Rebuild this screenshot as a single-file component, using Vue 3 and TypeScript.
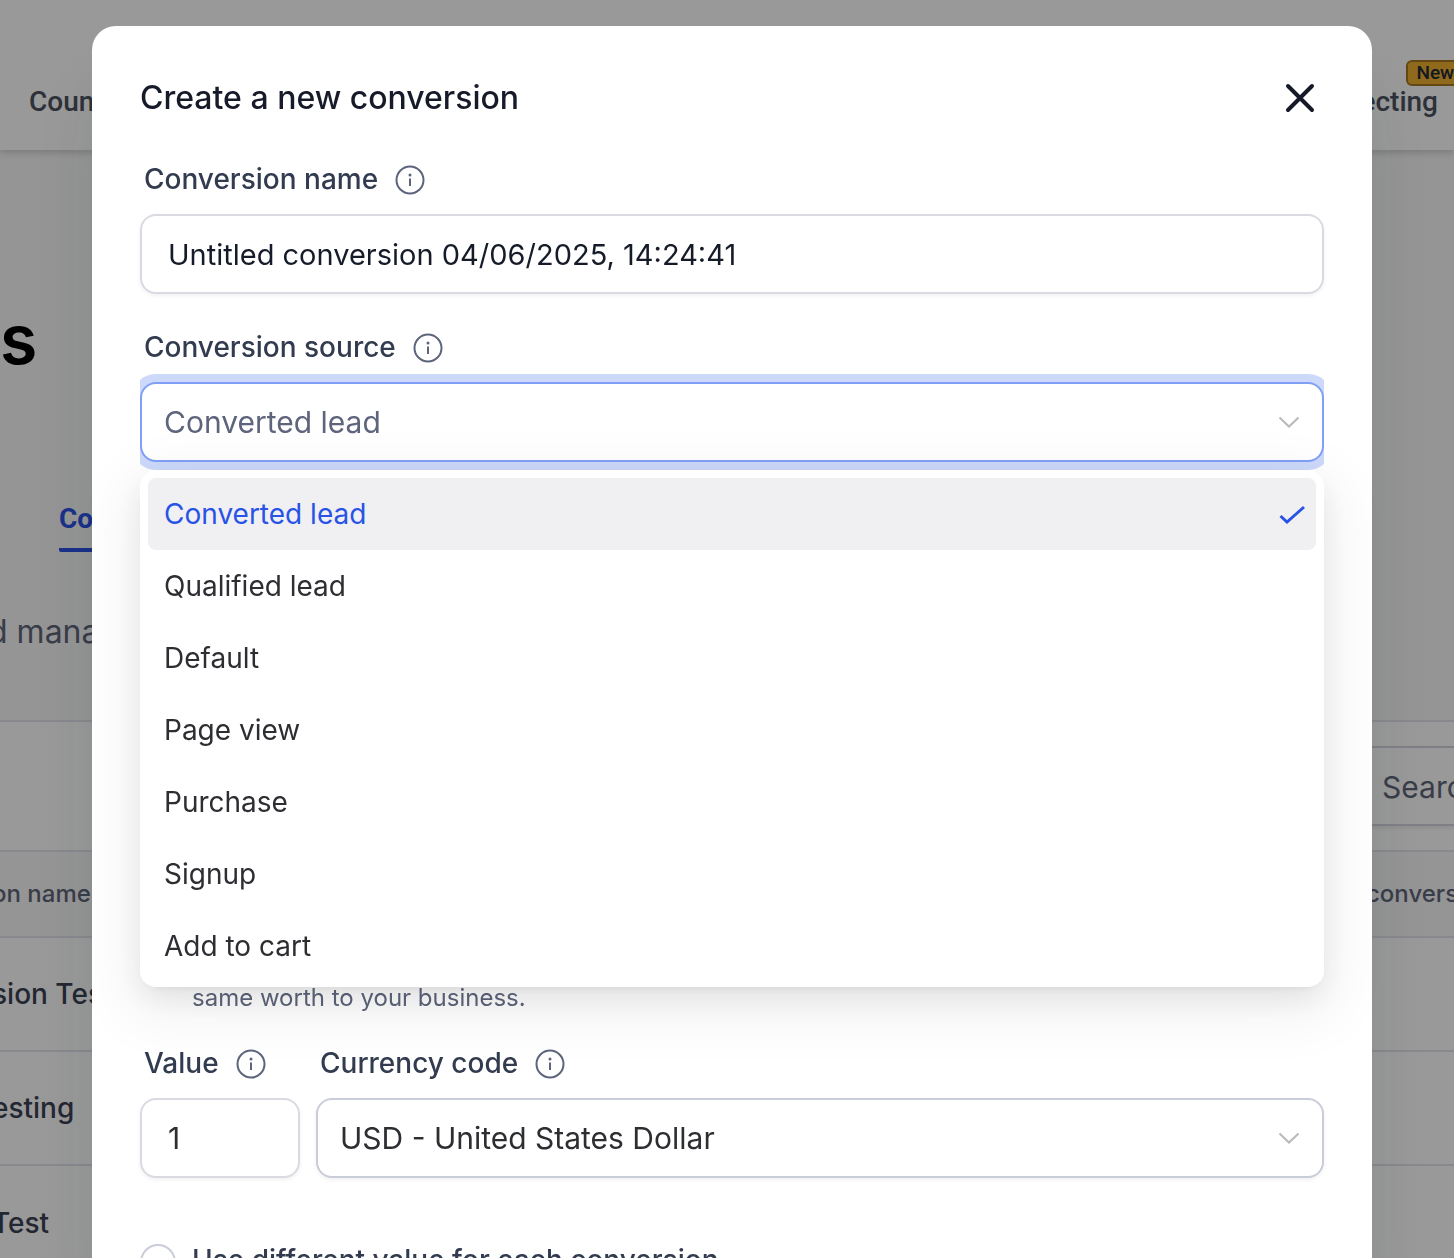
<script setup lang="ts">
import { ref } from 'vue'

const name = ref('Untitled conversion 04/06/2025, 14:24:41')
const source = ref('Converted lead')
const value = ref('1')
const currency = ref('USD - United States Dollar')
const mode = ref('same')

const sources: string[] = [
  'Converted lead',
  'Qualified lead',
  'Default',
  'Page view',
  'Purchase',
  'Signup',
  'Add to cart',
]
const rows: string[] = ['sion Tes', 'esting', 'Test']
</script>

<template>
  <div class="page">
    <header class="nav">
      <a href="#">Coun</a>
      <a href="#" class="nav-end">ecting<span class="badge">New</span></a>
    </header>
    <section class="hero">
      <h1>s</h1>
      <a href="#" class="tab">Co</a>
      <p>d mana</p>
    </section>
    <div class="toolbar">
      <input class="search" type="text" placeholder="Searc" aria-label="Search" />
    </div>
    <table>
      <thead>
        <tr><th>on name</th><th class="last">convers</th></tr>
      </thead>
      <tbody>
        <tr v-for="row in rows" :key="row"><td>{{ row }}</td><td class="last"></td></tr>
      </tbody>
    </table>
  </div>

  <div class="overlay">
    <form class="modal" role="dialog" aria-labelledby="title" @submit.prevent>
      <div class="title-row">
        <h2 id="title">Create a new conversion</h2>
        <button type="button" class="close" aria-label="Close">
          <svg viewBox="0 0 32 32" width="32" height="32"><path d="M4 4L28 28M28 4L4 28" /></svg>
        </button>
      </div>

      <div class="label-row">
        <label for="name">Conversion name</label>
        <svg class="info" viewBox="0 0 30 30"><circle cx="15" cy="15" r="13.500" /><path d="M15 13.500V21" /><circle class="dot" cx="15" cy="10" r="1.500" /></svg>
      </div>
      <input id="name" v-model="name" class="control name" type="text" />

      <div class="label-row spaced">
        <label for="source">Conversion source</label>
        <svg class="info" viewBox="0 0 30 30"><circle cx="15" cy="15" r="13.500" /><path d="M15 13.500V21" /><circle class="dot" cx="15" cy="10" r="1.500" /></svg>
      </div>
      <div class="source">
        <div class="select-box ring">
          <select id="source" v-model="source" class="control focused">
            <option v-for="s in sources" :key="s">{{ s }}</option>
          </select>
          <svg class="chevron" viewBox="0 0 24 16"><path d="M2.500 3.500L12 12.500L21.500 3.500" /></svg>
        </div>
        <ul class="menu" role="listbox" aria-label="Conversion source">
          <li v-for="s in sources" :key="s" role="option" :aria-selected="s === source" :class="{ selected: s === source }" @click="source = s">
            {{ s }}
            <svg v-if="s === source" viewBox="0 0 28 22" width="28" height="22"><path d="M2.500 13L9 19L26 4" /></svg>
          </li>
        </ul>
      </div>

      <p class="help">same worth to your business.</p>

      <div class="money">
        <div class="value">
          <div class="label-row">
            <label for="value">Value</label>
            <svg class="info" viewBox="0 0 30 30"><circle cx="15" cy="15" r="13.500" /><path d="M15 13.500V21" /><circle class="dot" cx="15" cy="10" r="1.500" /></svg>
          </div>
          <input id="value" v-model="value" class="control number" type="text" inputmode="decimal" />
        </div>
        <div class="currency">
          <div class="label-row">
            <label for="currency">Currency code</label>
            <svg class="info" viewBox="0 0 30 30"><circle cx="15" cy="15" r="13.500" /><path d="M15 13.500V21" /><circle class="dot" cx="15" cy="10" r="1.500" /></svg>
          </div>
          <div class="select-box">
            <select id="currency" v-model="currency" class="control">
              <option>USD - United States Dollar</option>
            </select>
            <svg class="chevron" viewBox="0 0 24 16"><path d="M2.500 3.500L12 12.500L21.500 3.500" /></svg>
          </div>
        </div>
      </div>

      <label class="radio">
        <input v-model="mode" type="radio" name="mode" value="different" />
        <span>Use different value for each conversion</span>
      </label>
    </form>
  </div>
</template>

<style>
body {
  margin: 0;
  overflow: hidden;
}
</style>

<style scoped>
.page,
.overlay {
  font-family: Inter, "Liberation Sans", sans-serif;
  box-sizing: border-box;
  height: 100vh;
  overflow: hidden;
}
.page {
  background: #fff;
}
.page *,
.overlay * {
  box-sizing: border-box;
}
.nav {
  position: relative;
  display: flex;
  justify-content: space-between;
  align-items: center;
  height: 150px;
  padding: 54px 16px 0 29px;
  background: #fff;
  box-shadow: 0 2px 8px rgba(0, 0, 0, 0.2);
}
.nav a {
  color: #4b5261;
  font: 500 28px/32px Roboto, sans-serif;
  text-decoration: none;
}
.nav-end {
  position: relative;
}
.badge {
  position: absolute;
  top: -26px;
  left: 46px;
  padding: 0 8px;
  border: 2px solid #a87722;
  border-radius: 6px;
  background: #eeb02f;
  color: #202838;
  font-size: 19px;
  line-height: 22px;
}
.hero {
  height: 572px;
  padding-top: 141px;
  border-bottom: 2px solid #e1e4ea;
  background: #f8f8f8;
}
.hero h1 {
  margin: 0;
  color: #000;
  font-size: 68px;
  font-weight: 600;
  line-height: 96px;
}
.tab {
  display: block;
  width: 200px;
  height: 52px;
  margin: 113px 0 0 59px;
  border-bottom: 4px solid #2952e6;
  border-radius: 2px;
  color: #2952e6;
  font: 700 28px/38px Roboto, sans-serif;
  text-decoration: none;
}
.hero p {
  margin: 60px 0 0 -12px;
  color: #5f667a;
  font-size: 32px;
  line-height: 40px;
}
.toolbar {
  display: flex;
  justify-content: flex-end;
  padding: 24px 0;
}
.search {
  width: 160px;
  height: 80px;
  margin-right: -24px;
  padding: 2px 0 0 62px;
  border: 2px solid #d3d6df;
  background: #fff;
  color: #5f667a;
  font: inherit;
  font-size: 30px;
  box-shadow: 0 2px 4px rgba(0, 0, 0, 0.08);
}
.search::placeholder {
  color: #5f667a;
}
table {
  width: 100%;
  border-collapse: collapse;
  table-layout: fixed;
}
th,
td {
  height: 114px;
  padding: 0;
  border-top: 2px solid #e1e4ea;
  color: #3a4254;
  font-size: 28px;
  font-weight: 500;
  text-align: left;
  white-space: nowrap;
}
th {
  height: 86px;
  padding-bottom: 2px;
  background: #f8f8f8;
  color: #5f667a;
  font-size: 24px;
}
th:first-child,
td:first-child {
  text-indent: -8px;
}
.last {
  width: 88px;
}
.overlay {
  position: fixed;
  inset: 0;
  padding: 26px 82px 0 92px;
  background: rgba(0, 0, 0, 0.4);
}
.modal {
  height: 100vh;
  padding: 48px;
  border-radius: 24px;
  background: #fff;
  box-shadow: 0 48px 80px -8px rgba(20, 30, 40, 0.12);
}
.title-row {
  display: flex;
  justify-content: space-between;
  align-items: center;
  height: 48px;
  padding-right: 8px;
}
h2 {
  margin: 0;
  color: #171b29;
  font-size: 32px;
  font-weight: 500;
  line-height: 48px;
}
.close {
  display: flex;
  padding: 0;
  border: 0;
  background: none;
}
.close path {
  fill: none;
  stroke: #141a27;
  stroke-width: 4;
  stroke-linecap: round;
}
.label-row {
  display: flex;
  align-items: center;
  gap: 17px;
  height: 40px;
  margin: 38px 0 14px 4px;
  color: #323b4f;
  font-size: 28px;
  font-weight: 500;
  white-space: nowrap;
}
.label-row label {
  padding-bottom: 2px;
}
.label-row.spaced {
  margin-top: 34px;
}
.info {
  flex: none;
  width: 30px;
  height: 30px;
  fill: none;
  stroke: #5d647b;
  stroke-width: 2;
}
.dot {
  fill: #5d647b;
  stroke: none;
}
.control {
  display: block;
  width: 100%;
  height: 80px;
  padding: 0 26px;
  border: 2px solid #dadae2;
  border-radius: 16px;
  outline: none;
  background: #fff;
  color: #161b29;
  font: inherit;
  font-size: 30px;
  box-shadow: 0 2px 4px rgba(0, 0, 0, 0.06);
}
.control.name {
  font-size: 29px;
}
select.control {
  padding: 0 22px;
  border-color: #c9cdd9;
  color: #2d2e32;
  appearance: none;
}
.control.number {
  color: #2d2e32;
}
select.control.focused {
  border-color: #809ff7;
  color: #5d647b;
  box-shadow: 0 0 0 8px #cdd9fb;
}
.select-box {
  position: relative;
}
.ring {
  overflow-x: clip;
}
.chevron {
  position: absolute;
  top: 32px;
  right: 23px;
  width: 24px;
  height: 16px;
  fill: none;
  stroke: #b9b9b9;
  stroke-width: 2;
  pointer-events: none;
}
.source {
  position: relative;
}
.menu {
  position: absolute;
  top: 88px;
  left: 0;
  right: 0;
  margin: 0;
  padding: 8px 8px 5px;
  border-radius: 16px;
  background: #fff;
  box-shadow: 0 12px 32px rgba(0, 0, 0, 0.08), 0 6px 12px -8px rgba(0, 0, 0, 0.12), 0 18px 56px 16px rgba(0, 0, 0, 0.05);
  list-style: none;
}
.menu li {
  display: flex;
  justify-content: space-between;
  align-items: center;
  height: 72px;
  padding: 0 10px 0 16px;
  border-radius: 8px;
  color: #2d2e32;
  font-size: 28px;
}
.menu li.selected {
  background: #f0f0f3;
  color: #2952e6;
}
.menu path {
  fill: none;
  stroke: #2952e6;
  stroke-width: 3;
}
.help {
  margin: 520px 0 0 52px;
  color: #5d647b;
  font-size: 24px;
  line-height: 32px;
}
.money {
  display: flex;
  gap: 16px;
}
.money .label-row {
  margin-top: 30px;
}
.value {
  width: 160px;
}
.currency {
  flex: 1;
}
.radio {
  display: flex;
  align-items: flex-start;
  gap: 16px;
  margin-top: 66px;
  color: #323b4f;
  font-size: 28px;
  font-weight: 500;
  line-height: 32px;
}
.radio input {
  width: 36px;
  height: 36px;
  margin: 0;
  border: 2px solid #c9cdd9;
  border-radius: 50%;
  appearance: none;
}
</style>
